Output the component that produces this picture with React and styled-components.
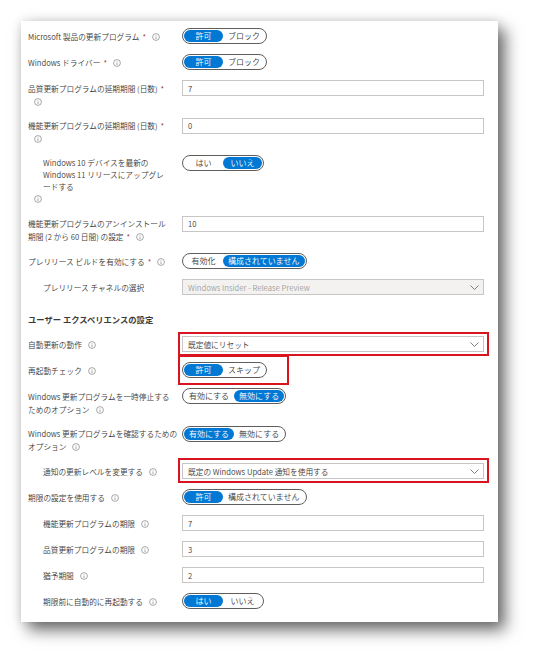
import React from 'react';
import styled, { createGlobalStyle } from 'styled-components';

const Global = createGlobalStyle`
  html, body { margin: 0; padding: 0; background: #fff; }
  body {
    font-family: "Noto Sans CJK JP", "Noto Sans", sans-serif;
    color: #3b3a39;
    -webkit-font-smoothing: antialiased;
  }
`;

const Page = styled.div`
  width: 540px;
  height: 666px;
  box-sizing: border-box;
  padding: 21px 0 0 21px;
  overflow: hidden;
`;

const Card = styled.div`
  width: 477px;
  box-sizing: border-box;
  background: #fff;
  padding: 7px 14px 13px 7px;
  box-shadow: 7px 8px 15px rgba(0, 0, 0, 0.58), 0 0 10px rgba(0, 0, 0, 0.12);
  display: flex;
  flex-direction: column;
  gap: 10px;
`;

const Row = styled.div`
  display: grid;
  grid-template-columns: 154px 302px;
  align-items: start;
`;

const Label = styled.div`
  font-size: 7.7px;
  font-weight: 350;
  line-height: ${(p) => p.$lh || 13}px;
  padding-top: 1.5px;
  padding-left: ${(p) => (p.$nested ? 15 : 0)}px;
  white-space: nowrap;
`;

const Indent = styled.span`
  display: block;
  padding-left: 15px;
`;

const Header = styled.div`
  font-size: 8.3px;
  font-weight: 700;
  line-height: 13px;
  margin-top: 8px;
`;

const Req = styled.span`
  color: #a4262c;
  margin-left: 3px;
`;

const InfoSvg = styled.svg`
  width: 8px;
  height: 8px;
  vertical-align: -1px;
  margin-left: 6px;
`;

const Info = () => (
  <InfoSvg viewBox="0 0 8 8">
    <circle cx="4" cy="4" r="3.4" fill="none" stroke="#797775" strokeWidth="0.65" />
    <line x1="4" y1="3.5" x2="4" y2="6" stroke="#797775" strokeWidth="0.65" />
    <circle cx="4" cy="2.3" r="0.42" fill="#797775" />
  </InfoSvg>
);

const Control = styled.div`
  display: flex;
  align-items: flex-start;
`;

const Pill = styled.div`
  display: flex;
  height: 16px;
  box-sizing: border-box;
  border: 1px solid #605e5c;
  border-radius: 8px;
  padding: 1px;
`;

const Seg = styled.span`
  min-width: 39px;
  padding: 0 5px;
  box-sizing: border-box;
  height: 12px;
  line-height: 12px;
  text-align: center;
  font-size: 8px;
  font-weight: 350;
  border-radius: 6px;
  white-space: nowrap;
  background: ${(p) => (p.$on ? '#0078d4' : 'transparent')};
  color: ${(p) => (p.$on ? '#fff' : '#3b3a39')};
`;

const Field = styled.div`
  width: 100%;
  height: 16px;
  box-sizing: border-box;
  border: 1px solid #c8c6c4;
  background: ${(p) => (p.$disabled ? '#f3f2f1' : '#fff')};
  color: ${(p) => (p.$disabled ? '#a19f9d' : '#3b3a39')};
  display: flex;
  align-items: center;
  justify-content: space-between;
  padding: 0 4px 0 5px;
  font-size: 7.7px;
  font-weight: 350;
  white-space: nowrap;
`;

const Annotated = styled.div`
  position: relative;
  display: flex;
  width: ${(p) => (p.$full ? '100%' : 'auto')};
`;

const Frame = styled.span`
  position: absolute;
  top: ${(p) => p.$t}px;
  left: ${(p) => p.$l}px;
  right: ${(p) => p.$r}px;
  bottom: ${(p) => p.$b}px;
  border: 2px solid #d7141f;
  pointer-events: none;
`;

const Chevron = () => (
  <svg width="9" height="5" viewBox="0 0 9 5">
    <path d="M0.5 0.5 L4.5 4.5 L8.5 0.5" fill="none" stroke="#605e5c" strokeWidth="0.8" />
  </svg>
);

const Toggle = ({ options, sel }) => (
  <Pill>
    {options.map((o, i) => (
      <Seg key={o} $on={i === sel}>
        {o}
      </Seg>
    ))}
  </Pill>
);

const Input = ({ value }) => <Field>{value}</Field>;

const Select = ({ value, disabled }) => (
  <Field $disabled={disabled}>
    <span>{value}</span>
    <Chevron />
  </Field>
);

export default function App() {
  return (
    <>
      <Global />
      <Page>
        <Card>
          <Row>
            <Label>
              Microsoft 製品の更新プログラム<Req>*</Req>
              <Info />
            </Label>
            <Control>
              <Toggle options={['許可', 'ブロック']} sel={0} />
            </Control>
          </Row>
          <Row>
            <Label>
              Windows ドライバー<Req>*</Req>
              <Info />
            </Label>
            <Control>
              <Toggle options={['許可', 'ブロック']} sel={0} />
            </Control>
          </Row>
          <Row>
            <Label>
              品質更新プログラムの延期期間 (日数)<Req>*</Req>
              <br />
              <Info />
            </Label>
            <Control>
              <Input value="7" />
            </Control>
          </Row>
          <Row>
            <Label>
              機能更新プログラムの延期期間 (日数)<Req>*</Req>
              <br />
              <Info />
            </Label>
            <Control>
              <Input value="0" />
            </Control>
          </Row>
          <Row>
            <Label $lh={12.3}>
              <Indent>
                Windows 10 デバイスを最新の
                <br />
                Windows 11 リリースにアップグレ
                <br />
                ードする
              </Indent>
              <Info />
            </Label>
            <Control>
              <Toggle options={['はい', 'いいえ']} sel={1} />
            </Control>
          </Row>
          <Row>
            <Label>
              機能更新プログラムのアンインストール
              <br />
              期間 (2 から 60 日間) の設定<Req>*</Req>
              <Info />
            </Label>
            <Control>
              <Input value="10" />
            </Control>
          </Row>
          <Row>
            <Label>
              プレリリース ビルドを有効にする<Req>*</Req>
              <Info />
            </Label>
            <Control>
              <Toggle options={['有効化', '構成されていません']} sel={1} />
            </Control>
          </Row>
          <Row>
            <Label $nested>プレリリース チャネルの選択</Label>
            <Control>
              <Select value="Windows Insider - Release Preview" disabled />
            </Control>
          </Row>

          <Header>ユーザー エクスペリエンスの設定</Header>

          <Row>
            <Label>
              自動更新の動作
              <Info />
            </Label>
            <Control>
              <Annotated $full>
                <Select value="既定値にリセット" />
                <Frame $t={-4} $l={-4} $r={-5} $b={-4} />
              </Annotated>
            </Control>
          </Row>
          <Row>
            <Label>
              再起動チェック
              <Info />
            </Label>
            <Control>
              <Annotated>
                <Toggle options={['許可', 'スキップ']} sel={0} />
                <Frame $t={-7} $l={-4} $r={-22} $b={-7} />
              </Annotated>
            </Control>
          </Row>
          <Row>
            <Label>
              Windows 更新プログラムを一時停止する
              <br />
              ためのオプション
              <Info />
            </Label>
            <Control>
              <Toggle options={['有効にする', '無効にする']} sel={1} />
            </Control>
          </Row>
          <Row>
            <Label>
              Windows 更新プログラムを確認するための
              <br />
              オプション
              <Info />
            </Label>
            <Control>
              <Toggle options={['有効にする', '無効にする']} sel={0} />
            </Control>
          </Row>
          <Row>
            <Label $nested>
              通知の更新レベルを変更する
              <Info />
            </Label>
            <Control>
              <Annotated $full>
                <Select value="既定の Windows Update 通知を使用する" />
                <Frame $t={-5} $l={-4} $r={-5} $b={-4} />
              </Annotated>
            </Control>
          </Row>
          <Row>
            <Label>
              期限の設定を使用する
              <Info />
            </Label>
            <Control>
              <Toggle options={['許可', '構成されていません']} sel={0} />
            </Control>
          </Row>
          <Row>
            <Label $nested>
              機能更新プログラムの期限
              <Info />
            </Label>
            <Control>
              <Input value="7" />
            </Control>
          </Row>
          <Row>
            <Label $nested>
              品質更新プログラムの期限
              <Info />
            </Label>
            <Control>
              <Input value="3" />
            </Control>
          </Row>
          <Row>
            <Label $nested>
              猶予期間
              <Info />
            </Label>
            <Control>
              <Input value="2" />
            </Control>
          </Row>
          <Row>
            <Label $nested>
              期限前に自動的に再起動する
              <Info />
            </Label>
            <Control>
              <Toggle options={['はい', 'いいえ']} sel={0} />
            </Control>
          </Row>
        </Card>
      </Page>
    </>
  );
}
